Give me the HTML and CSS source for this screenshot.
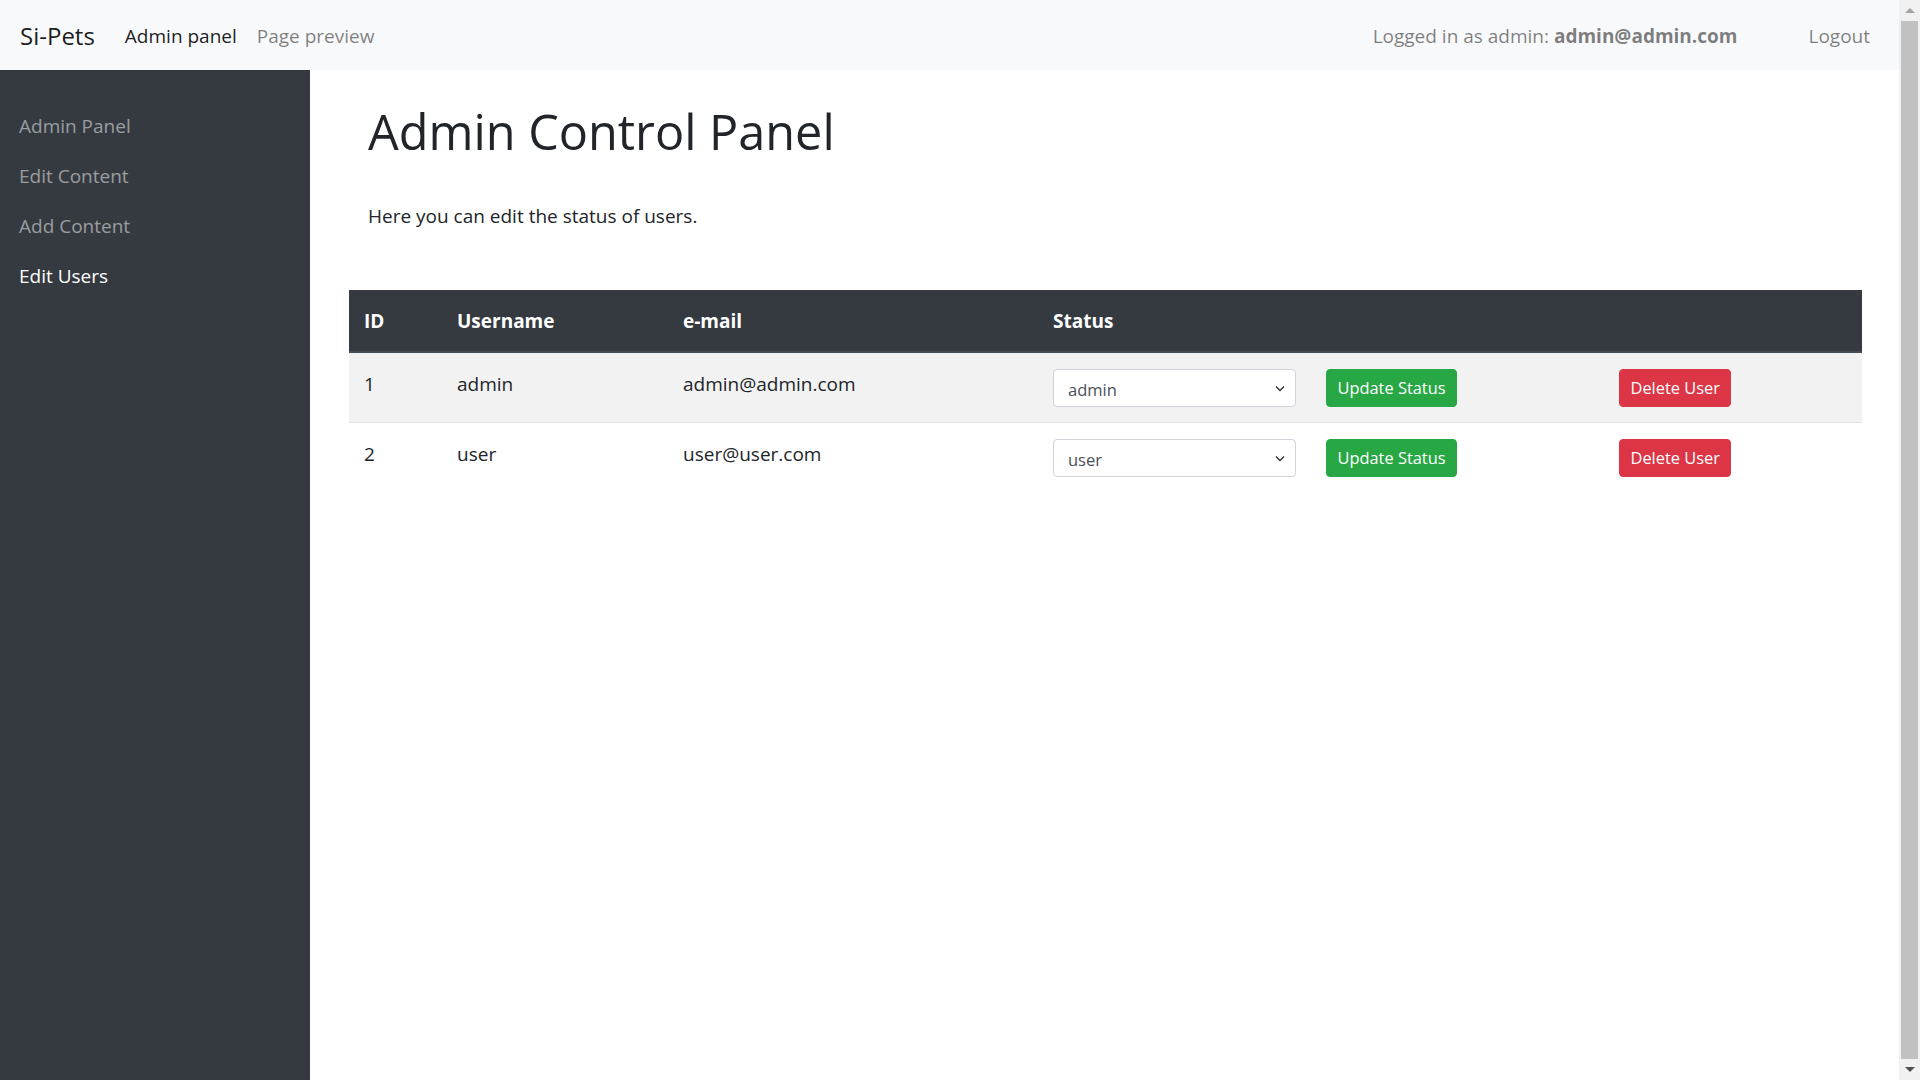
FILE: index.html
```html
<!DOCTYPE html>
<html lang="en">
<head>
<meta charset="utf-8">
<title>Si-Pets Admin</title>
<link rel="stylesheet" href="styles.css">
</head>
<body>
<div class="window">
  <div class="page">
    <nav class="navbar">
      <a class="brand">Si-Pets</a>
      <a class="nav-link active">Admin panel</a>
      <a class="nav-link">Page preview</a>
      <span class="spacer"></span>
      <span class="navbar-text">Logged in as admin: <b>admin@admin.com</b></span>
      <a class="nav-link logout">Logout</a>
    </nav>
    <div class="layout">
      <aside class="sidebar">
        <a class="side-link">Admin Panel</a>
        <a class="side-link">Edit Content</a>
        <a class="side-link">Add Content</a>
        <a class="side-link active">Edit Users</a>
      </aside>
      <main class="main">
        <h1 class="title">Admin Control Panel</h1>
        <p class="lead">Here you can edit the status of users.</p>
        <table class="table">
          <thead>
            <tr>
              <th class="c-id">ID</th>
              <th class="c-user">Username</th>
              <th class="c-mail">e-mail</th>
              <th class="c-status">Status</th>
              <th class="c-upd"></th>
              <th class="c-del"></th>
            </tr>
          </thead>
          <tbody>
            <tr class="striped">
              <td>1</td>
              <td>admin</td>
              <td>admin@admin.com</td>
              <td><div class="select"><span>admin</span><svg class="chev" width="10" height="7" viewBox="0 0 10 7"><path d="M1 1.5 L5 5.5 L9 1.5" fill="none" stroke="#333" stroke-width="1.4"/></svg></div></td>
              <td><button class="btn btn-success">Update Status</button></td>
              <td><button class="btn btn-danger">Delete User</button></td>
            </tr>
            <tr>
              <td>2</td>
              <td>user</td>
              <td>user@user.com</td>
              <td><div class="select"><span>user</span><svg class="chev" width="10" height="7" viewBox="0 0 10 7"><path d="M1 1.5 L5 5.5 L9 1.5" fill="none" stroke="#333" stroke-width="1.4"/></svg></div></td>
              <td><button class="btn btn-success">Update Status</button></td>
              <td><button class="btn btn-danger">Delete User</button></td>
            </tr>
          </tbody>
        </table>
      </main>
    </div>
  </div>
  <div class="scrollbar">
    <div class="arrow up"></div>
    <div class="thumb"></div>
    <div class="arrow down"></div>
  </div>
</div>
</body>
</html>
```
FILE: styles.css
```css
* { box-sizing: border-box; }
html, body { margin: 0; padding: 0; height: 100%; overflow: hidden; }
body {
  font-family: "Open Sans", "Noto Sans", sans-serif;
  font-size: 19px;
  line-height: 30px;
  color: #212529;
  background: #fff;
}
.window { display: flex; height: 100vh; }
.page { flex: 1; display: flex; flex-direction: column; min-width: 0; }

.navbar {
  height: 70px;
  background: #f8f9fa;
  display: flex;
  align-items: center;
  padding: 2px 19px 0 20px;
}
.brand { font-size: 24px; color: rgba(0,0,0,.9); margin-right: 20px; line-height: 30px; }
.nav-link { padding: 10px 10px; color: rgba(0,0,0,.5); }
.nav-link.active { color: rgba(0,0,0,.9); }
.spacer { flex: 1; }
.navbar-text { color: rgba(0,0,0,.5); margin-right: 61px; }
.navbar-text b { font-weight: 700; }

.layout { flex: 1; display: flex; min-height: 0; }
.sidebar {
  width: 310px;
  background: #343a40;
  padding-top: 31px;
  display: flex;
  flex-direction: column;
}
.side-link { padding: 10px 19px; color: rgba(255,255,255,.5); line-height: 30px; }
.side-link.active { color: #fff; }

.main { flex: 1; padding: 31px 37px 0 39px; }
.title {
  margin: 0 0 40px 19px;
  font-size: 48.6px;
  font-weight: 500;
  line-height: 60px;
}
.lead { margin: 0 0 59px 19px; }

.table { width: 1513px; border-collapse: collapse; }
.table th, .table td { padding: 15px; text-align: left; vertical-align: top; }
.table thead th {
  background: #343a40;
  color: #fff;
  font-weight: 700;
  padding-top: 16px;
  border-bottom: 2px solid #454d55;
  vertical-align: bottom;
}
.table tbody td { border-top: 1px solid #dee2e6; padding-top: 16px; padding-bottom: 15px; }
.table tbody tr.striped td { background: #f2f2f2; }
.table tbody tr:first-child td { border-top: 0; }
.c-id { width: 93px; }
.c-user { width: 226px; }
.c-mail { width: 370px; }
.c-status { width: 273px; }
.c-upd { width: 293px; }
.c-del { width: 258px; }

.select {
  width: 243px;
  height: 38px;
  background: #fff;
  border: 1px solid #ced4da;
  border-radius: 4px;
  display: flex;
  align-items: center;
  justify-content: space-between;
  padding: 3px 10px 0 14px;
  font-size: 16.5px;
  color: #495057;
}
.chev { margin-top: -3px; }

.btn {
  height: 38px;
  border: 1px solid transparent;
  border-radius: 4px;
  padding: 0 10.5px;
  font-family: inherit;
  font-size: 16.4px;
  color: #fff;
  line-height: 36px;
}
.btn-success { background: #28a745; border-color: #28a745; }
.btn-danger { background: #dc3545; border-color: #dc3545; }

.scrollbar {
  width: 21px;
  background: #f1f1f1;
  display: flex;
  flex-direction: column;
  align-items: center;
}
.arrow { width: 0; height: 0; border-left: 5px solid transparent; border-right: 5px solid transparent; }
.arrow.up { border-bottom: 5px solid #a3a3a3; margin: 8px 0 8px; }
.arrow.down { border-top: 5px solid #505050; margin: 8px 0 8px; }
.thumb { flex: 1; width: 17px; background: #c1c1c1; }
```
